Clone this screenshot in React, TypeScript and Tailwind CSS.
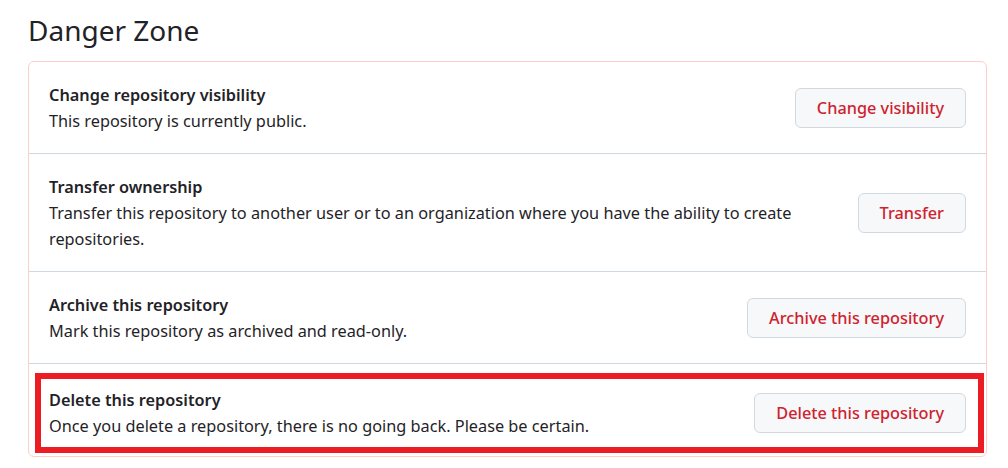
const FONT = { fontFamily: '"Segoe UI", "Noto Sans", "Liberation Sans", sans-serif' };

function DangerButton({ label }: { label: string }) {
  return (
    <button className="h-10 shrink-0 whitespace-nowrap rounded-md border border-[#d1d9e0] bg-[#f6f8fa] px-[21px] text-[16.3px] font-medium text-[#cf222e]">
      {label}
    </button>
  );
}

function RowBody({
  title,
  desc,
  action,
}: {
  title: string;
  desc: string;
  action: string;
}) {
  return (
    <>
      <div className="min-w-0 flex-1 pr-[50px] text-[16.3px] leading-[26px] text-[#1f2328]">
        <div className="font-semibold">{title}</div>
        <p>{desc}</p>
      </div>
      <DangerButton label={action} />
    </>
  );
}

const ROWS = [
  {
    title: "Change repository visibility",
    desc: "This repository is currently public.",
    action: "Change visibility",
  },
  {
    title: "Transfer ownership",
    desc: "Transfer this repository to another user or to an organization where you have the ability to create repositories.",
    action: "Transfer",
  },
  {
    title: "Archive this repository",
    desc: "Mark this repository as archived and read-only.",
    action: "Archive this repository",
  },
];

export default function App() {
  return (
    <div className="h-[468px] w-[1008px] bg-white pl-7 pr-[21px]" style={FONT}>
      <h2 className="pt-[9px] pb-[10px] text-[28px] leading-[42px] font-normal text-[#1f2328]">
        Danger Zone
      </h2>
      <div className="rounded-md border border-[#ffcecb]">
        {ROWS.map((r) => (
          <div
            key={r.title}
            className="flex items-center border-b border-[#d1d9e0] px-[20px] pt-5 pb-[19px]"
          >
            <RowBody {...r} />
          </div>
        ))}
        {/* highlighted row */}
        <div className="pt-[9px] pr-[2px] pb-[3px] pl-[6px]">
          <div className="flex items-center border-[6px] border-[#ec1c24] py-2 pr-[12px] pl-[8px]">
            <RowBody
              title="Delete this repository"
              desc="Once you delete a repository, there is no going back. Please be certain."
              action="Delete this repository"
            />
          </div>
        </div>
      </div>
    </div>
  );
}
